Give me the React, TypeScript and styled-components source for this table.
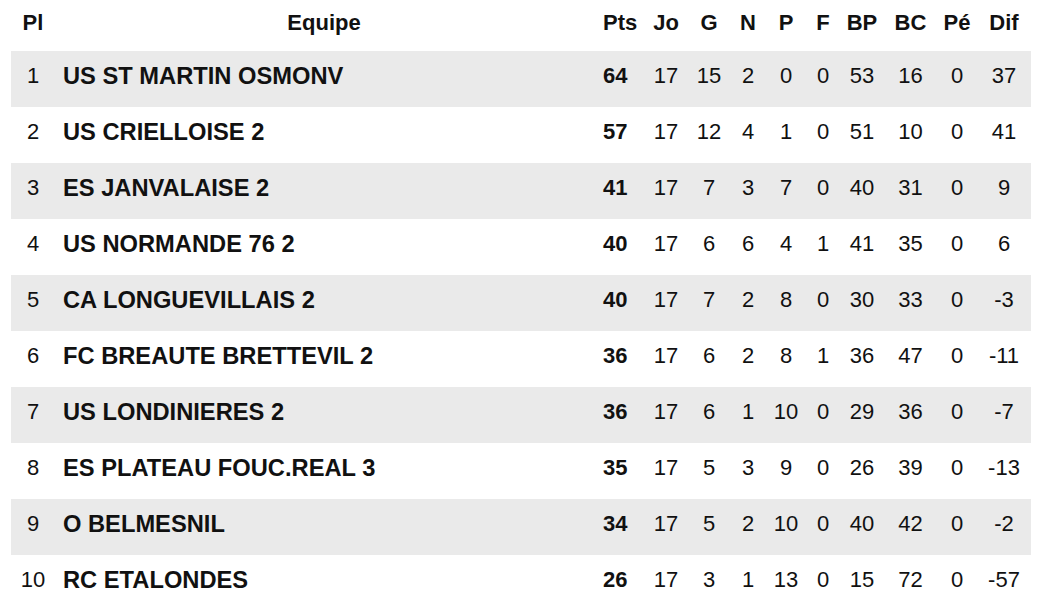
import styled, { createGlobalStyle } from "styled-components";

const GlobalStyle = createGlobalStyle`
  html, body {
    margin: 0;
    padding: 0;
    background: #fff;
  }
  body {
    font-family: "Liberation Sans", Arial, Helvetica, sans-serif;
    color: #111;
  }
`;

const Page = styled.div`
  padding: 0 15px 0 11px;
`;

const Table = styled.table`
  width: 1020px;
  table-layout: fixed;
  border-collapse: collapse;
  font-size: 22px;
`;

const HeadCell = styled.th<{ $align?: string }>`
  height: 45px;
  padding: 0 0 6px;
  font-weight: 700;
  text-align: ${(p) => p.$align || "center"};
  padding-left: ${(p) => (p.$align === "left" ? "10px" : "0")};
`;

const Row = styled.tr<{ $striped: boolean }>`
  height: 56px;
  background: ${(p) => (p.$striped ? "#eaeaea" : "transparent")};
`;

const Cell = styled.td<{ $align?: string; $bold?: boolean }>`
  padding: 0 0 6px;
  text-align: ${(p) => p.$align || "center"};
  font-weight: ${(p) => (p.$bold ? 700 : 400)};
  white-space: nowrap;
`;

const TeamCell = styled(Cell)`
  padding-left: 8px;
  text-align: left;
  font-weight: 700;
  font-size: 23.7px;
`;

const PtsCell = styled(Cell)`
  padding-left: 10px;
  text-align: left;
  font-weight: 700;
`;

type Team = {
  name: string;
  pts: number;
  jo: number;
  g: number;
  n: number;
  p: number;
  f: number;
  bp: number;
  bc: number;
  pe: number;
  dif: number;
};

const teams: Team[] = [
  { name: "US ST MARTIN OSMONV", pts: 64, jo: 17, g: 15, n: 2, p: 0, f: 0, bp: 53, bc: 16, pe: 0, dif: 37 },
  { name: "US CRIELLOISE 2", pts: 57, jo: 17, g: 12, n: 4, p: 1, f: 0, bp: 51, bc: 10, pe: 0, dif: 41 },
  { name: "ES JANVALAISE 2", pts: 41, jo: 17, g: 7, n: 3, p: 7, f: 0, bp: 40, bc: 31, pe: 0, dif: 9 },
  { name: "US NORMANDE 76 2", pts: 40, jo: 17, g: 6, n: 6, p: 4, f: 1, bp: 41, bc: 35, pe: 0, dif: 6 },
  { name: "CA LONGUEVILLAIS 2", pts: 40, jo: 17, g: 7, n: 2, p: 8, f: 0, bp: 30, bc: 33, pe: 0, dif: -3 },
  { name: "FC BREAUTE BRETTEVIL 2", pts: 36, jo: 17, g: 6, n: 2, p: 8, f: 1, bp: 36, bc: 47, pe: 0, dif: -11 },
  { name: "US LONDINIERES 2", pts: 36, jo: 17, g: 6, n: 1, p: 10, f: 0, bp: 29, bc: 36, pe: 0, dif: -7 },
  { name: "ES PLATEAU FOUC.REAL 3", pts: 35, jo: 17, g: 5, n: 3, p: 9, f: 0, bp: 26, bc: 39, pe: 0, dif: -13 },
  { name: "O BELMESNIL", pts: 34, jo: 17, g: 5, n: 2, p: 10, f: 0, bp: 40, bc: 42, pe: 0, dif: -2 },
  { name: "RC ETALONDES", pts: 26, jo: 17, g: 3, n: 1, p: 13, f: 0, bp: 15, bc: 72, pe: 0, dif: -57 },
];

const colWidths = [44, 538, 51, 44, 42, 36, 40, 34, 44, 53, 40, 54];

const App = () => {
  return (
    <Page>
      <GlobalStyle />
      <Table>
        <colgroup>
          {colWidths.map((w, i) => (
            <col key={i} style={{ width: w }} />
          ))}
        </colgroup>
        <thead>
          <tr>
            <HeadCell>Pl</HeadCell>
            <HeadCell>Equipe</HeadCell>
            <HeadCell $align="left">Pts</HeadCell>
            <HeadCell>Jo</HeadCell>
            <HeadCell>G</HeadCell>
            <HeadCell>N</HeadCell>
            <HeadCell>P</HeadCell>
            <HeadCell>F</HeadCell>
            <HeadCell>BP</HeadCell>
            <HeadCell>BC</HeadCell>
            <HeadCell>Pé</HeadCell>
            <HeadCell>Dif</HeadCell>
          </tr>
        </thead>
        <tbody>
          {teams.map((t, idx) => (
            <Row key={t.name} $striped={idx % 2 === 0}>
              <Cell>{idx + 1}</Cell>
              <TeamCell>{t.name}</TeamCell>
              <PtsCell>{t.pts}</PtsCell>
              <Cell>{t.jo}</Cell>
              <Cell>{t.g}</Cell>
              <Cell>{t.n}</Cell>
              <Cell>{t.p}</Cell>
              <Cell>{t.f}</Cell>
              <Cell>{t.bp}</Cell>
              <Cell>{t.bc}</Cell>
              <Cell>{t.pe}</Cell>
              <Cell>{t.dif}</Cell>
            </Row>
          ))}
        </tbody>
      </Table>
    </Page>
  );
};

export default App;
